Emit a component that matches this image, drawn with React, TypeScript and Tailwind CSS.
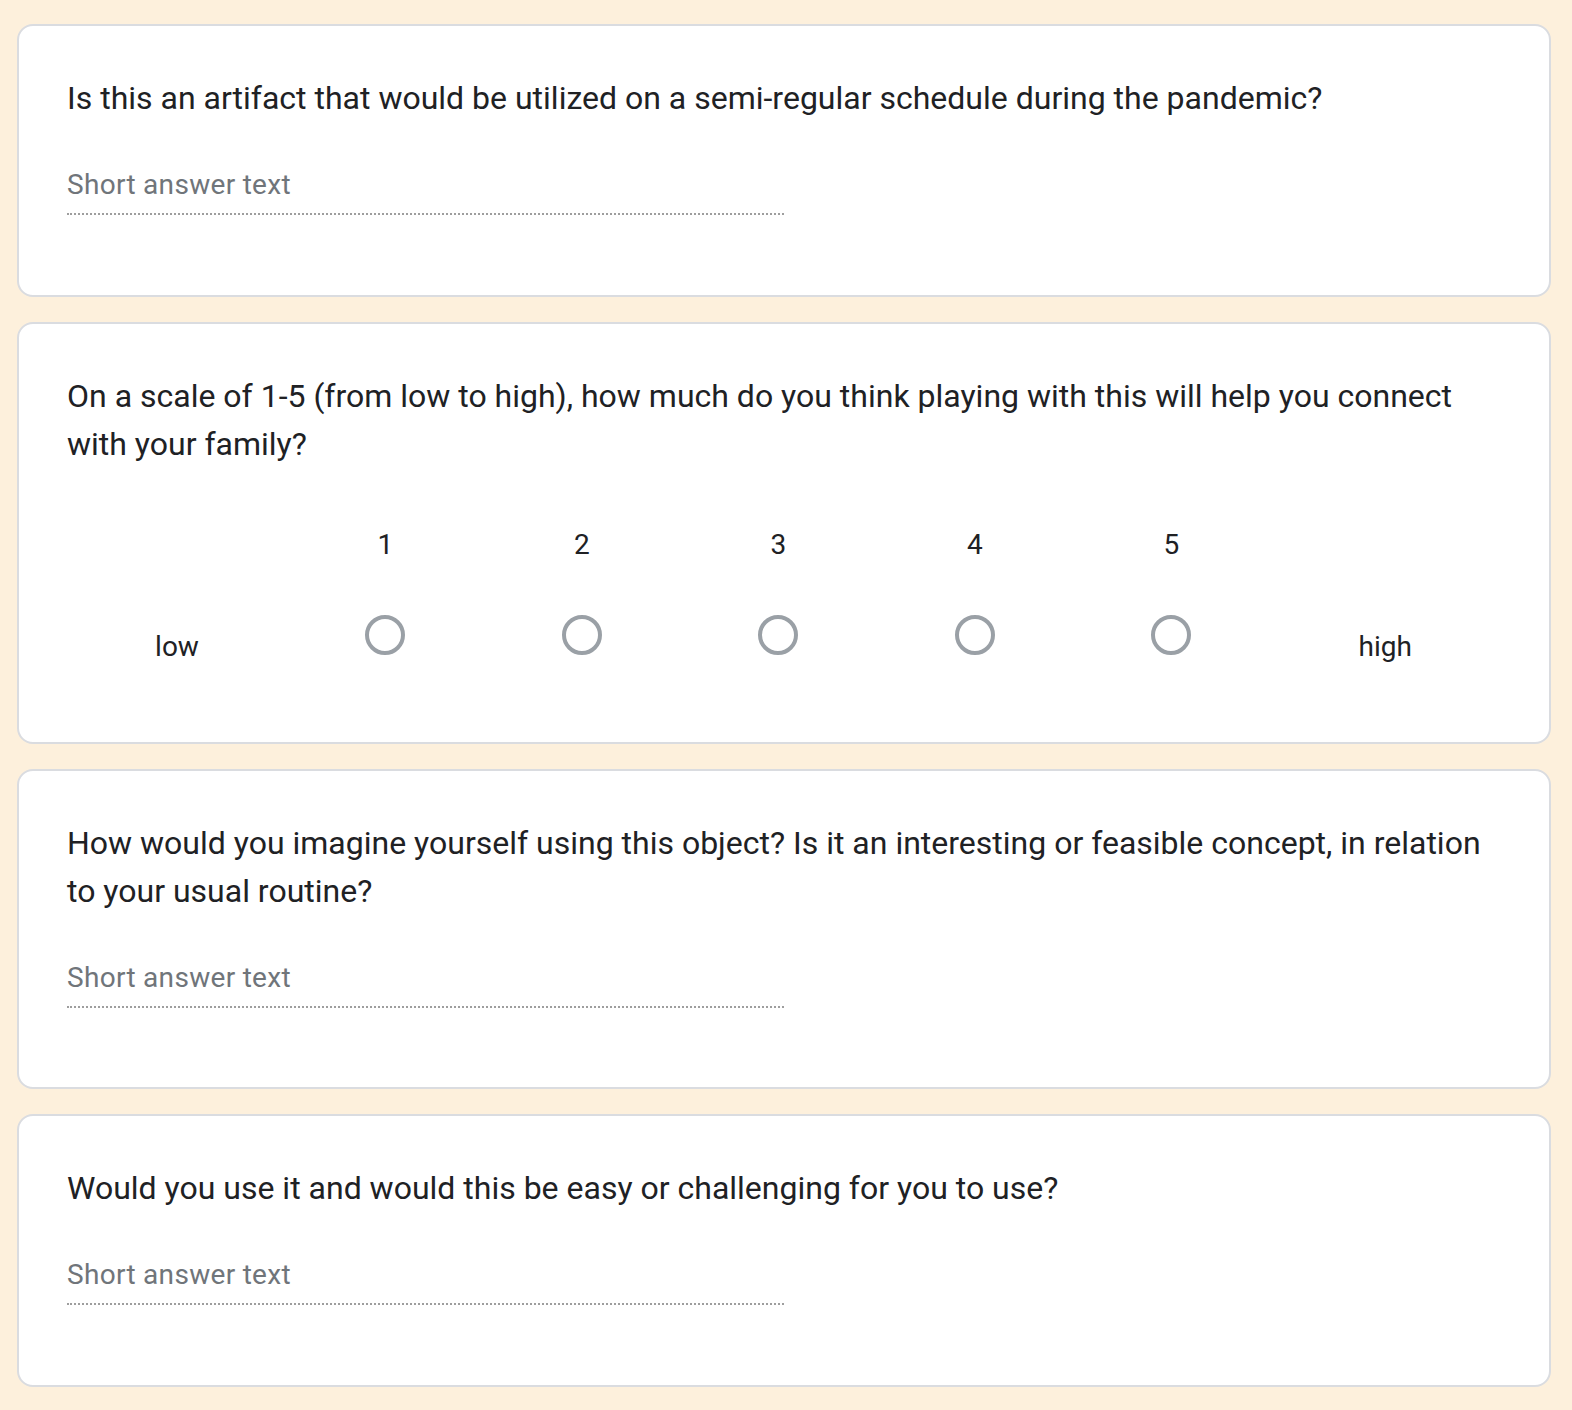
const font = { fontFamily: "Roboto, 'Noto Sans', sans-serif" };

function ShortAnswer() {
  return (
    <div className="mt-[43px] w-1/2 border-b-2 border-dotted border-[#9e9e9e] pb-[8px] text-[28px] leading-[40px] tracking-[0.3px] text-[#70757a]">
      Short answer text
    </div>
  );
}

function Card({ children, pb = "pb-[80px]" }: { children: React.ReactNode; pb?: string }) {
  return (
    <div className={`rounded-[16px] border-2 border-[#dadce0] bg-white px-[48px] pt-[48px] ${pb}`}>
      {children}
    </div>
  );
}

function Question({ text }: { text: string }) {
  return <div className="text-[32px] leading-[48px] text-[#202124]">{text}</div>;
}

function Scale() {
  const nums = [1, 2, 3, 4, 5];
  return (
    <div className="mt-[57px] flex text-[#202124]">
      <div className="flex w-[220px] flex-col items-center">
        <div className="h-[40px]" />
        <div className="mt-[50px] h-[52px] pt-[12px] text-[28px] leading-[40px]">low</div>
      </div>
      {nums.map((n) => (
        <div key={n} className="flex w-[196.5px] flex-col items-center">
          <div className="h-[40px] text-[28px] leading-[40px]">{n}</div>
          <div className="mt-[50px] h-[52px]">
            <div className="h-[40px] w-[40px] rounded-full border-[4px] border-[#9aa0a6]" />
          </div>
        </div>
      ))}
      <div className="flex flex-1 flex-col items-center">
        <div className="h-[40px]" />
        <div className="mt-[50px] h-[52px] pt-[12px] text-[28px] leading-[40px]">high</div>
      </div>
    </div>
  );
}

export default function App() {
  return (
    <div className="min-h-[1410px] bg-[#fdf0dc] pt-[24px]" style={font}>
      <div className="ml-[17px] flex w-[1534px] flex-col gap-[25px]">
        <Card>
          <Question text="Is this an artifact that would be utilized on a semi-regular schedule during the pandemic?" />
          <ShortAnswer />
        </Card>
        <Card pb="pb-[75px]">
          <Question text="On a scale of 1-5 (from low to high), how much do you think playing with this will help you connect with your family?" />
          <Scale />
        </Card>
        <Card pb="pb-[79px]">
          <Question text="How would you imagine yourself using this object? Is it an interesting or feasible concept, in relation to your usual routine?" />
          <ShortAnswer />
        </Card>
        <Card>
          <Question text="Would you use it and would this be easy or challenging for you to use?" />
          <ShortAnswer />
        </Card>
      </div>
    </div>
  );
}
